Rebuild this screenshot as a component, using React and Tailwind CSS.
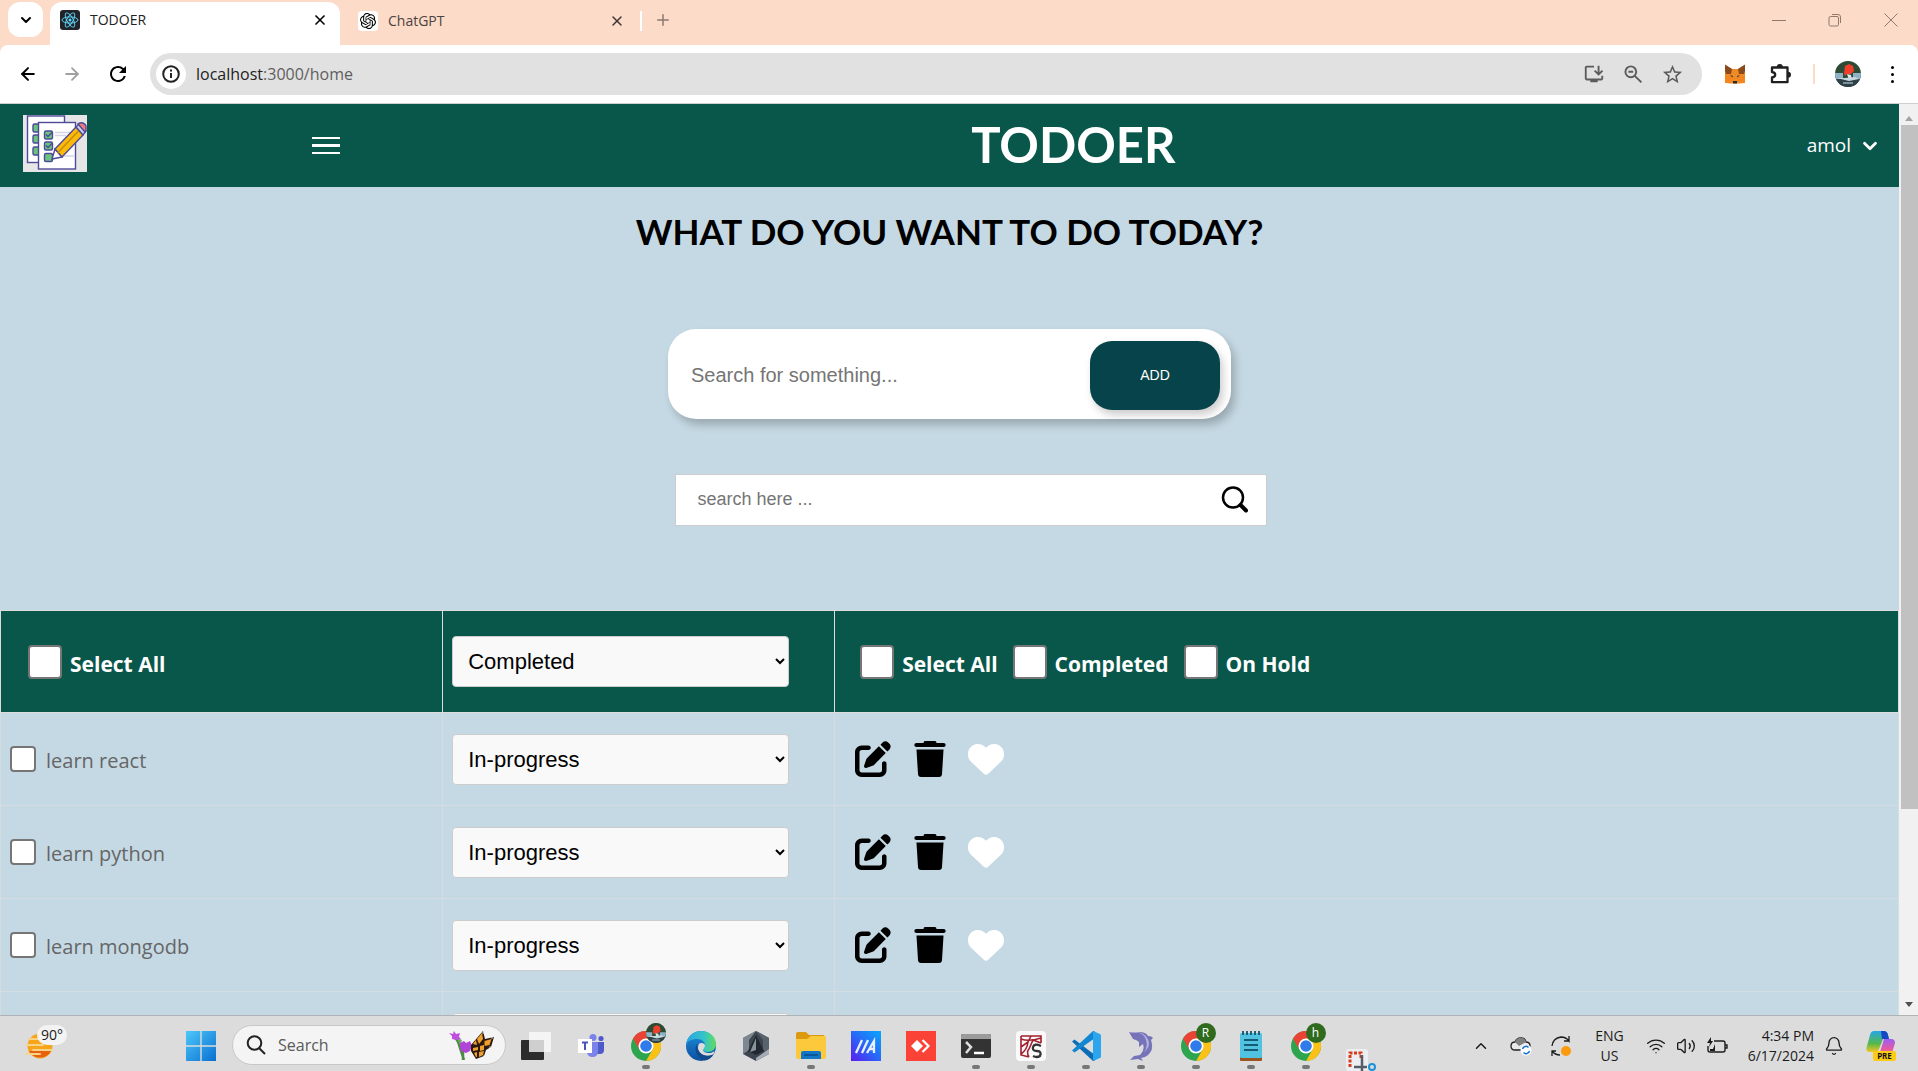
import React from "react";
import { FaPenToSquare, FaHeart } from "react-icons/fa6";
import { MdInstallDesktop, MdStarOutline, MdRefresh } from "react-icons/md";
import { X, Plus, ArrowLeft, ArrowRight, ChevronDown, ChevronUp, Bell, Wifi, Volume2 } from "lucide-react";
import { SiOpenai } from "react-icons/si";

const tasks = ["learn react", "learn python", "learn mongodb", ""];

function ReactLogo() {
  return (
    <svg viewBox="0 0 20 20" className="size-5">
      <rect width="20" height="20" rx="3" fill="#20232a" />
      <g fill="none" stroke="#61dafb" strokeWidth="0.9">
        <ellipse cx="10" cy="10" rx="8" ry="3.1" />
        <ellipse cx="10" cy="10" rx="8" ry="3.1" transform="rotate(60 10 10)" />
        <ellipse cx="10" cy="10" rx="8" ry="3.1" transform="rotate(120 10 10)" />
      </g>
      <circle cx="10" cy="10" r="1.5" fill="#61dafb" />
    </svg>
  );
}

function ZoomOutIcon() {
  return (
    <svg viewBox="0 0 20 20" className="size-5" fill="none" stroke="#5b5b5b" strokeWidth="1.9">
      <circle cx="7.8" cy="7.8" r="5.4" />
      <path d="M11.8 11.8 18.4 18.4M5.4 7.8h4.8" />
    </svg>
  );
}

function PuzzleIcon() {
  return (
    <svg viewBox="0 0 22 22" className="size-[22px]">
      <path d="M2 4.500h15.500v14.700H2v-4.700q3.200-.6 3.200-2.800T2 9z" fill="none" stroke="#1f1f1f" strokeWidth="2.300" strokeLinejoin="round" />
      <path d="M6.800 4a3 3 0 0 1 6 0zM18 8.800a3 3 0 0 1 0 6z" fill="#1f1f1f" />
    </svg>
  );
}

function Fox() {
  return (
    <svg viewBox="0 0 22 20" className="h-5 w-[22px]">
      <path d="M1 1 8 5h6l7-4v18l-5.500 0.500L13 19.500H9l-2.500 0L1 19z" fill="#f08a24" />
      <path d="M1 .5 8 5l-1 5-5 0L1 7zM21 .5 14 5l1 5 5 0 1-3z" fill="#8a4a1c" />
      <path d="M1 12h5l2 5-6 2zM21 12h-5l-2 5 6 2z" fill="#f5841f" />
      <path d="M9 17h4v2.500H9z" fill="#2b2b2b" />
      <path d="M6 11l3 1-.5 1.500zM16 11l-3 1 .5 1.500z" fill="#2b3a42" />
    </svg>
  );
}

function Photo({ id, className }) {
  return (
    <svg viewBox="0 0 26 26" className={className}>
      <clipPath id={id}><circle cx="13" cy="13" r="13" /></clipPath>
      <g clipPath={`url(#${id})`}>
        <rect width="26" height="26" fill="#2c4a34" />
        <path d="M0 12h8v7H0zM18 12h8v7h-8z" fill="#8fb3c6" />
        <path d="M0 18h26v8H0z" fill="#2f4048" />
        <path d="M10 5l4-2 4 2 1 5-3 3-4 0-2 2-1-3z" fill="#f0402c" />
        <path d="M12 13l4 1 1 5h-3z" fill="#dfe8ec" />
        <path d="M2 17l8 0 10-1 4 2-10 2z" fill="#c9d9e0" />
        <path d="M8 21h10v2H8z" fill="#7a9099" />
      </g>
    </svg>
  );
}

function TodoLogo() {
  return (
    <svg viewBox="0 0 64 57" className="h-[57px] w-16" aria-label="Todo list">
      <rect width="64" height="57" fill="#e6e6e6" />
      <g stroke="#4d4a99" strokeWidth="1.4">
        <rect x="4.500" y="1" width="37" height="46.500" fill="#fff" />
        <g fill="#6cc47c">
          <rect x="10" y="9" width="9" height="8" rx="1.500" />
          <rect x="10" y="20" width="9" height="8" rx="1.500" />
          <rect x="10" y="32" width="9" height="8" rx="1.500" />
        </g>
        <rect x="15.500" y="7.500" width="37" height="46.500" fill="#fff" />
        <g fill="#6cc47c">
          <rect x="21.500" y="16" width="8" height="8" rx="1.500" />
          <rect x="21.500" y="27" width="8" height="8" rx="1.500" />
          <rect x="21.500" y="38.500" width="8" height="8" rx="1.500" />
          <path d="m23 19.500 2 2 4-4M23 30.500l2 2 4-4" fill="none" />
        </g>
        <path d="M32 17.500h15M32 20.500h11M40 41h11" stroke="#d5d4ea" />
        <path d="M29 44 32 34l7 8z" fill="#fff" />
        <path d="M32 34 53 12l7 8-21 22z" fill="#fbb908" />
        <path d="m34.500 38 21-22" stroke="#c98a12" />
        <path d="m53 12 3-3 7 7-3 4z" fill="#c9d0ee" />
        <path d="m55 9 2-1q4-1 6 3v4l-1 2z" fill="#f0797b" />
      </g>
    </svg>
  );
}

function TrashIcon() {
  return (
    <svg viewBox="0 0 32 36" className="h-9 w-8">
      <path d="M11 0h10q1.500 0 1.500 2H29.500q2.200 0 2.200 2t-2.200 2H2.500Q.3 6 .3 4t2.200-2h7Q9.500 0 11 0z" />
      <path d="M2.500 8.500h27L28 33q-.2 3-3 3H7q-2.800 0-3-3z" />
    </svg>
  );
}

function ChromeLogo() {
  return (
    <svg viewBox="0 0 48 48" className="size-[30px]">
      <circle cx="24" cy="24" r="24" fill="#2da44e" />
      <path d="M24 24 3.200 12A24 24 0 0 1 44.800 12z" fill="#ea4335" />
      <path d="M24 12h20.800A24 24 0 0 1 24 48l10.400-18z" fill="#fbc116" />
      <path d="M3.200 12 13.600 30 24 12z" fill="#ea4335" />
      <circle cx="24" cy="24" r="12" fill="#fff" />
      <circle cx="24" cy="24" r="9.300" fill="#2f7bea" />
    </svg>
  );
}

function ChromeApp({ badge }) {
  return (
    <span className="relative">
      <ChromeLogo />
      <span className="absolute -top-2 -right-[5px] flex size-5 items-center justify-center rounded-full bg-[#2f6b1f] text-xs leading-none text-white">
        {badge}
      </span>
    </span>
  );
}

function EdgeLogo() {
  return (
    <svg viewBox="0 0 30 30" className="size-[30px]">
      <defs>
        <linearGradient id="edgeTop" x1="0" x2="1"><stop stopColor="#2aa5e0" /><stop offset=".6" stopColor="#35c4c8" /><stop offset="1" stopColor="#62dd5b" /></linearGradient>
        <linearGradient id="edgeLow" y2="1" x2="0"><stop stopColor="#1b8fdc" /><stop offset="1" stopColor="#0c4fa0" /></linearGradient>
      </defs>
      <circle cx="15" cy="15" r="15" fill="url(#edgeLow)" />
      <path d="M0 14C1 5 8 0 15 0c9 0 15 6 15 13 0 5-4 8-8 8-3 0-5-1-5-2s2-2 2-5c0-3-3-6-8-6S1 10 0 14z" fill="url(#edgeTop)" />
      <path d="M15 12c3 0 4 1 4 3s-2 3-2 4c0 2 3 3 6 3 2 0 4-1 5.500-1.800L27 24c-8 3-15-1-15-7 0-3 1-5 3-5z" fill="#dcdcdc" />
      <path d="M11 13c-3 3-2 14 8 16.500 4-.5 7-3 8.600-6.200C20 27 11 23 11 13z" fill="#114a8b" />
    </svg>
  );
}

function Butterfly() {
  return (
    <svg viewBox="0 0 46 30" className="h-[30px] w-[46px]">
      <path d="M4 6q5 3 7 12l4 12M14 17v13" stroke="#4c8a45" strokeWidth="2.500" fill="none" />
      <path d="M8 8l5 2-2 5z" fill="#6aa860" />
      <path d="M0 3l4 1 1-3 2 3 4-1-1 4 2 2-5 1-4-1 0-3z" fill="#c04fe0" />
      <path d="M11 13l4-2 2 2 4-2 2 5-2 5-4 2-5-2-1-4z" fill="#b044d4" />
      <path d="M22 15 34 1l2 8 9-2-3 10-5 3-2 6-8 3-5-8z" fill="#2b1a12" />
      <path d="M24 14l3-4 1 5zM28 9l5-6 1 6-4 5zM35.500 11l7-2-2 6-5 1zM24 18l5-1 0 3-5 1zM31 16l4-1v5l-4 1zM25 23l3-1 0 5-1 0zM30 22l5-1-1 4-4 2z" fill="#f0a02c" />
      <g fill="#fff"><circle cx="34" cy="3" r=".7" /><circle cx="43" cy="8" r=".7" /><circle cx="41" cy="17" r=".7" /><circle cx="35" cy="26" r=".7" /></g>
    </svg>
  );
}

function TaskView() {
  return (
    <svg viewBox="0 0 30 28" className="h-7 w-[30px]">
      <rect y="8" width="23" height="20" rx="1" fill="#2c2c2c" />
      <rect x="8" width="22" height="20" rx="1" fill="#f4f4f4" />
      <rect x="8" y="8" width="15" height="12" fill="#cfcfcf" />
    </svg>
  );
}

function Teams() {
  return (
    <svg viewBox="0 0 26 24" className="h-6 w-[26px]">
      <circle cx="15" cy="3.500" r="3.500" fill="#7b83eb" /><circle cx="23" cy="4.500" r="2.600" fill="#5059c9" />
      <path d="M18 8h8v8q0 4-4 4h-4z" fill="#5059c9" />
      <path d="M9 8h11v9q0 6-5.500 6T9 17z" fill="#7b83eb" />
      <rect y="5" width="14" height="14" fill="#fff" />
      <path d="M4 8.500h6M7 8.500v7.500" stroke="#4b53bc" strokeWidth="2" />
    </svg>
  );
}

function Cube() {
  return (
    <svg viewBox="0 0 28 30" className="h-[30px] w-7">
      <path d="M14 0 27 7v16L14 30 1 23V7z" fill="#3c4550" />
      <path d="M14 0 1 7v16l6-4V9z" fill="#7d8792" />
      <path d="M14 0 27 7v16l-6-4V9z" fill="#59636e" />
      <path d="M14 4 22 20 14 24 6 20z" fill="#22282f" />
      <path d="M14 7v12l-6 2z" fill="#8a949e" />
      <path d="M14 27 27 18v5L14 30z" fill="#a5adb5" />
    </svg>
  );
}

function Folder() {
  return (
    <svg viewBox="0 0 30 28" className="h-7 w-[30px]">
      <path d="M0 2q0-2 2-2h8l3 3h15v6H0z" fill="#dc9a10" />
      <path d="M0 7h11l4-3h15v21q0 2-2 2H2q-2 0-2-2z" fill="#fcc93c" />
      <path d="M5 27v-6q0-2 2-2h16q2 0 2 2v6z" fill="#1377c8" />
      <path d="M8 23h14" stroke="#0a4b87" strokeWidth="1.500" />
    </svg>
  );
}

function Armoury() {
  return (
    <svg viewBox="0 0 30 30" className="size-[30px]">
      <defs><linearGradient id="armoury" x1="0" y1="1" x2="1" y2="0"><stop stopColor="#5b1cf0" /><stop offset=".5" stopColor="#2869f7" /><stop offset="1" stopColor="#08a6fb" /></linearGradient></defs>
      <rect width="30" height="30" fill="url(#armoury)" />
      <path d="m5 22 6-13M11 22l6-13M16 22l7-12v12M18 18h4" stroke="#e8f1ff" strokeWidth="2.300" fill="none" />
    </svg>
  );
}

function AnyDesk() {
  return (
    <svg viewBox="0 0 30 30" className="size-[30px]">
      <rect width="30" height="30" fill="#fb4236" />
      <path d="m5 15 6-6 6 6-6 6z" fill="#fff" />
      <path d="m16.500 9 6 6-6 6" stroke="#fff" strokeWidth="2.200" fill="none" />
    </svg>
  );
}

function Terminal() {
  return (
    <svg viewBox="0 0 30 24" className="h-6 w-[30px]">
      <rect width="30" height="24" rx="2" fill="#333" />
      <path d="M0 5V2q0-2 2-2h26q2 0 2 2v3z" fill="#9b9b9b" />
      <path d="m5 8 5 5-5 6" stroke="#ddd" strokeWidth="2.500" fill="none" />
      <path d="M13 19h10" stroke="#fff" strokeWidth="2.500" />
    </svg>
  );
}

function WebApp() {
  return (
    <svg viewBox="0 0 30 30" className="size-[30px]">
      <rect width="30" height="30" rx="4" fill="#fafafa" />
      <path d="M5 5h20v7M5 5v19l8 2M5 8q8 3 20-1M5 16l7-5 3-6M12 11q-1 8-7 12M13 26q-3-5 0-8M25 12l-8-3-4 9" stroke="#a31f2c" strokeWidth="1.600" fill="none" />
      <path d="M25 15q-7-3-8 1t4 4 3 5q-3 2-7 0" stroke="#333" strokeWidth="2.300" fill="none" />
    </svg>
  );
}

function VsCode() {
  return (
    <svg viewBox="0 0 30 30" className="size-[30px]">
      <path d="M1 10.500 3.500 8.500 24 24v5.500L22 30z" fill="#0a6db5" />
      <path d="M1 19.500 3.500 21.500 24 7V.5L22 0z" fill="#1187d3" />
      <path d="M22 0l7 3q1 .5 1 1.500v21q0 1-1 1.500l-7 3z" fill="#2aa5ee" />
    </svg>
  );
}

function Dolphin() {
  return (
    <svg viewBox="0 0 26 30" className="h-[30px] w-[26px]">
      <path d="M1 1q5 1 10 0 7 0 9 4 4 0 5 2l-2 2q4 12-6 17l-4 1 2 3-5-2-8 1 4-4 6-1q5-5 3-11l-4 3 0-5q-2-2-6-3z" fill="#7673b8" />
      <path d="M2 1.500q12-1 15 5 4 8-1 15 7-6 4-13Q16-1 2 1.500z" fill="#b5b2e4" />
    </svg>
  );
}

function Notepad() {
  return (
    <svg viewBox="0 0 22 30" className="h-[30px] w-[22px]">
      <rect y="25" width="22" height="5" rx="1" fill="#9c5420" />
      <rect y="2" width="22" height="25" rx="1.500" fill="#4fc3e0" />
      <path d="M3 0v4M7 0v4M11 0v4M15 0v4M19 0v4" stroke="#14546c" strokeWidth="1.800" />
      <path d="M4 9h14M4 14h14M4 19h14" stroke="#145b76" strokeWidth="2" />
    </svg>
  );
}

function SnippingTool() {
  return (
    <svg viewBox="0 0 30 22" className="mt-auto h-[22px] w-[30px]">
      <rect width="22" height="22" rx="3" fill="#eceff1" />
      <path d="M4 18V4h11v5" stroke="#d83b1c" strokeWidth="3" strokeDasharray="3 1.500" fill="none" />
      <path d="M16 6v16M8 18h13" stroke="#555e66" strokeWidth="2.500" />
      <circle cx="26" cy="18" r="3" stroke="#1c93d8" strokeWidth="2" fill="none" />
    </svg>
  );
}

function Weather() {
  return (
    <span className="relative block pt-1">
      <svg viewBox="0 0 30 26" className="h-[26px] w-[30px]">
        <circle cx="15" cy="13" r="12.500" fill="#f7a51b" />
        <path d="M4 18a12.500 12.500 0 0 0 22 0z" fill="#e8620c" />
        <path d="M4 6h12M2 12h16M8 17h19M1 21h14" stroke="#f6d58a" strokeWidth="2" strokeLinecap="round" />
      </svg>
      <span className="absolute -top-1 left-3 rounded-full bg-[#f3f3f3] px-1 text-sm leading-5 text-[#1b1b1b]">90°</span>
    </span>
  );
}

function Copilot() {
  return (
    <svg viewBox="0 0 30 30" className="size-[30px]">
      <defs>
        <linearGradient id="copA" y2="1" x2="0"><stop stopColor="#22a7e8" /><stop offset=".6" stopColor="#56b84a" /><stop offset="1" stopColor="#f2c522" /></linearGradient>
        <linearGradient id="copB" y2="1" x2="0"><stop stopColor="#9c5cf2" /><stop offset=".6" stopColor="#e759a4" /><stop offset="1" stopColor="#f58c50" /></linearGradient>
      </defs>
      <path d="M8 0h10q3 0 4 4l1 4h-6l-4 10q-1 3-4 3H4q-5 0-3-6L4 4q1-4 4-4z" fill="url(#copA)" />
      <path d="M15 0h3q3 0 4 4l1 4h-7z" fill="#1647c4" />
      <path d="M18 8h7q4 0 4 4l-3 10q-1 3-4 3H10q3 0 4-4z" fill="url(#copB)" />
      <rect x="7" y="20" width="23" height="10" rx="2" fill="#fccc14" />
      <text x="18.500" y="28" textAnchor="middle" fontSize="8" fontWeight="700" fontFamily="Noto Sans, sans-serif" fill="#111">PRE</text>
    </svg>
  );
}

function CloudSync() {
  return (
    <svg viewBox="0 0 22 20" className="h-5 w-[22px]">
      <path d="M5 14q-4 0-4-4t4-4q2-5 7-4 3 0 4 4 4 0 4 4t-3 4z" fill="#e9e9e9" stroke="#222" strokeWidth="1.300" />
      <path d="M5 6q2-5 7-4 3 0 4 4l-7 4z" fill="#808080" />
      <circle cx="16" cy="14" r="5.500" fill="#fff" />
      <path d="M12.500 13a3.500 3.500 0 0 1 6-1.500M19.500 15a3.500 3.500 0 0 1-6 1.500" stroke="#1471d0" strokeWidth="1.500" fill="none" />
    </svg>
  );
}

function UpdateIcon() {
  return (
    <svg viewBox="0 0 22 22" className="size-[22px]" fill="none" stroke="#1c1c1c" strokeWidth="1.300">
      <path d="M2 11Q3 3 11 2q5 0 8 4V1M19 6h-5M2 21v-5h4M2 16q3 4 8 4" />
      <circle cx="16" cy="16" r="5" fill="#fb9a0d" stroke="none" />
    </svg>
  );
}

function Battery() {
  return (
    <svg viewBox="0 0 22 18" className="h-[18px] w-[22px]" fill="none" stroke="#1c1c1c" strokeWidth="1.400">
      <path d="M8 4h9q2 0 2 2v7q0 2-2 2H4q-2 0-2-2V9M19 8h2v3h-2" />
      <path d="M4 12h3l2-5v7H4z" fill="#1c1c1c" stroke="none" />
      <path d="M5 0 1 6h3L3 10l4-6H5z" fill="#1c1c1c" stroke="none" />
    </svg>
  );
}

function Caret({ up }) {
  return (
    <svg viewBox="0 0 8 5" className="h-[5px] w-2">
      <path d={up ? "M0 5 4 0l4 5z" : "M0 0h8L4 5z"} fill={up ? "#a3a3a3" : "#505050"} />
    </svg>
  );
}

const apps = [
  { name: "Task view", icon: <TaskView /> },
  { name: "Teams", icon: <Teams /> },
  { name: "Chrome", icon: <ChromeApp badge={<Photo id="chromePhoto" className="size-5" />} />, open: true },
  { name: "Edge", icon: <EdgeLogo /> },
  { name: "Cube", icon: <Cube /> },
  { name: "Files", icon: <Folder />, open: true },
  { name: "Armoury", icon: <Armoury /> },
  { name: "AnyDesk", icon: <AnyDesk /> },
  { name: "Terminal", icon: <Terminal />, open: true },
  { name: "Web tool", icon: <WebApp />, open: true },
  { name: "Code", icon: <VsCode />, open: true },
  { name: "Database", icon: <Dolphin />, open: true },
  { name: "Chrome R", icon: <ChromeApp badge="R" />, open: true },
  { name: "Notepad", icon: <Notepad />, open: true },
  { name: "Chrome h", icon: <ChromeApp badge="h" />, open: true },
  { name: "Snipping", icon: <SnippingTool /> },
];

function BrowserBar() {
  return (
    <header className="shrink-0 border-b border-[#cfcfcf] bg-[#fcdbc9]">
      <div className="flex h-[45px] items-center pl-2">
        <button aria-label="Search tabs" className="mr-[7px] mb-1.5 flex size-[35px] items-center justify-center rounded-xl bg-white">
          <ChevronDown className="size-4" strokeWidth={3} />
        </button>
        <div className="mt-0.5 flex h-[43px] w-[290px] items-center rounded-t-xl bg-white pr-3 pb-2 pl-2.5">
          <ReactLogo />
          <span className="ml-2.5 flex-1 text-sm text-[#222]">TODOER</span>
          <button aria-label="Close TODOER"><X className="size-4" strokeWidth={2.500} /></button>
        </div>
        <div className="mb-1 flex w-[302px] items-center justify-between border-r-2 border-white pr-[15px] pl-[18px]">
          <span className="mr-2.5 flex size-5 items-center justify-center rounded bg-white"><SiOpenai className="size-4" /></span>
          <span className="flex-1 text-sm text-[#4c4340]">ChatGPT</span>
          <button aria-label="Close ChatGPT"><X className="size-4 text-[#3c3532]" strokeWidth={2.200} /></button>
        </div>
        <button aria-label="New tab" className="mb-1.5 ml-3"><Plus className="size-[18px] text-[#8b7a72]" /></button>
        <div className="mb-1.5 ml-auto flex items-center gap-[42px] pr-5 text-[#91796d]">
          <button aria-label="Minimize"><svg viewBox="0 0 14 14" className="size-3.5" stroke="currentColor"><path d="M0 7.500h14" /></svg></button>
          <button aria-label="Restore"><svg viewBox="0 0 14 14" className="size-3.5" fill="none" stroke="currentColor"><rect x="1" y="3.500" width="9.500" height="9.500" rx="1.500" /><path d="M4 1.500h6q2.500 0 2.500 2.500v6" /></svg></button>
          <button aria-label="Close window"><svg viewBox="0 0 14 14" className="size-3.5" stroke="currentColor"><path d="m.5.5 13 13m0-13-13 13" /></svg></button>
        </div>
      </div>
      <div className="flex h-[58px] items-center rounded-t-lg bg-white pr-[18px] pl-[18px]">
        <button aria-label="Back"><ArrowLeft className="size-5" strokeWidth={2.400} /></button>
        <button aria-label="Forward" className="ml-6"><ArrowRight className="size-5 text-[#a0a0a0]" strokeWidth={2.200} /></button>
        <button aria-label="Reload" className="ml-6"><MdRefresh className="size-6" /></button>
        <div className="ml-5 flex h-[42px] flex-1 items-center rounded-full bg-[#e1e1e1] pr-[18px] pl-1.5">
          <button aria-label="Site information" className="flex size-[30px] items-center justify-center rounded-full bg-white">
            <svg viewBox="0 0 18 18" className="size-[18px]" fill="none" stroke="#222" strokeWidth="2"><circle cx="9" cy="9" r="7.800" /><path d="M9 8v5M9 4.500v2" /></svg>
          </button>
          <span className="ml-2.5 flex-1 text-base text-[#5f5f5f]"><span className="text-[#222]">localhost</span>:3000/home</span>
          <div className="flex items-center gap-[18px] text-[#5b5b5b]">
            <button aria-label="Install"><MdInstallDesktop className="size-[22px]" /></button>
            <button aria-label="Zoom"><ZoomOutIcon /></button>
            <button aria-label="Bookmark"><MdStarOutline className="size-[23px]" /></button>
          </div>
        </div>
        <button aria-label="Wallet" className="ml-[22px]"><Fox /></button>
        <button aria-label="Extensions" className="ml-6"><PuzzleIcon /></button>
        <span className="ml-[21px] h-5 w-0.5 bg-[#fcdbc9]" />
        <button aria-label="Profile" className="ml-5"><Photo id="profilePhoto" className="size-[26px]" /></button>
        <button aria-label="Menu" className="ml-6 flex flex-col gap-1 px-1.5">
          <i className="size-[3px] rounded-full bg-black" /><i className="size-[3px] rounded-full bg-black" /><i className="size-[3px] rounded-full bg-black" />
        </button>
      </div>
    </header>
  );
}

function StatusSelect({ id, value, label }) {
  return (
    <select id={id} aria-label={label} defaultValue={value} className="block h-[51px] w-[337px] rounded border border-[#ccc] bg-[#f9f9f9] px-[11px] font-['Liberation_Sans',Arial,sans-serif] text-[22px] font-normal text-black">
      <option>Completed</option>
      <option>In-progress</option>
      <option>On Hold</option>
    </select>
  );
}

function HeadCheck({ id, label }) {
  return (
    <span className="flex items-center">
      <input id={id} type="checkbox" className="size-[34px] appearance-none rounded border-2 border-[#767676] bg-white checked:bg-blue-600" />
      <label htmlFor={id} className="ml-2 pt-1 text-[21px] leading-7">{label}</label>
    </span>
  );
}

function TodoPage() {
  return (
    <main className="h-full flex-1 overflow-hidden bg-[#c5d9e4]">
      <nav className="grid h-[83px] grid-cols-[312px_1fr_auto] items-center bg-[#09574b] pr-[18px] text-white">
        <a href="#home" aria-label="Home" className="ml-[23px] w-16 pb-1"><TodoLogo /></a>
        <div className="flex items-center">
          <button aria-label="Open menu" className="flex flex-col gap-[5px]">
            <i className="h-0.5 w-7 bg-white" /><i className="h-[3px] w-7 bg-white" /><i className="h-0.5 w-7 bg-white" />
          </button>
          <span className="flex-1 pb-0.5 text-center font-['Lato',sans-serif] text-[49px] leading-none font-bold">TODOER</span>
        </div>
        <button className="flex items-center gap-2 text-[19px]">amol <ChevronDown className="size-[22px]" strokeWidth={3} /></button>
      </nav>
      <h1 className="mt-[22px] text-center font-['Lato',sans-serif] text-[35px] leading-[44px] font-bold text-black">WHAT DO YOU WANT TO DO TODAY?</h1>
      <form className="mx-auto mt-[76px] flex h-[90px] w-[563px] items-center rounded-[28px] bg-white pt-0.5 pr-[11px] pl-[23px] shadow-[4px_6px_8px_rgba(0,0,0,0.22)]">
        <input aria-label="New task" placeholder="Search for something..." className="min-w-0 flex-1 font-['Liberation_Sans',Arial,sans-serif] text-xl outline-none placeholder:text-[#757575]" />
        <button type="button" className="h-[69px] w-[130px] rounded-[22px] bg-[#07434a] font-['Liberation_Sans',Arial,sans-serif] text-sm text-white shadow-[3px_5px_8px_rgba(0,0,0,0.2)]">ADD</button>
      </form>
      <form className="mx-auto mt-[55px] flex h-[52px] w-[592px] translate-x-[21px] items-center border border-[#ccc] bg-white pr-[18px] pb-0.5 pl-[22px]">
        <input aria-label="Search tasks" placeholder="search here ..." className="min-w-0 flex-1 font-['Liberation_Sans',Arial,sans-serif] text-lg outline-none placeholder:text-[#757575]" />
        <button type="button" aria-label="Search">
          <svg viewBox="0 0 27 27" className="size-[27px]" fill="none" stroke="#000"><circle cx="12" cy="11.500" r="10" strokeWidth="2.500" /><path d="m19.500 19 5.500 5.500" strokeWidth="4" strokeLinecap="round" /></svg>
        </button>
      </form>
      <table className="mt-[84px] w-full table-fixed border-collapse">
        <thead className="bg-[#09574b] text-left text-white">
          <tr className="h-[102px]">
            <th className="w-[23.300%] border border-[#ddd] pl-[27px]"><HeadCheck id="all" label="Select All" /></th>
            <th className="w-[20.650%] border border-[#ddd] px-[9px]"><StatusSelect id="filter" label="Filter status" value="Completed" /></th>
            <th className="border border-[#ddd] pl-[25px]">
              <div className="flex gap-[15px]">
                <HeadCheck id="pick-all" label="Select All" />
                <HeadCheck id="pick-completed" label="Completed" />
                <HeadCheck id="pick-hold" label="On Hold" />
              </div>
            </th>
          </tr>
        </thead>
        <tbody>
          {tasks.map((task, i) => (
            <tr key={i} className="h-[93px]">
              <td className="border border-[#d6dde1] pl-[9px]">
                {task && (
                  <span className="flex items-center">
                    <input id={`task-${i}`} type="checkbox" className="size-[26px] appearance-none rounded border-2 border-[#767676] bg-white checked:bg-blue-600" />
                    <label htmlFor={`task-${i}`} className="ml-2.5 pt-1 text-xl leading-7 text-[#666]">{task}</label>
                  </span>
                )}
              </td>
              <td className="border border-[#d6dde1] px-[9px]"><StatusSelect id={`status-${i}`} label={`Status ${i + 1}`} value="In-progress" /></td>
              <td className="border border-[#d6dde1] pl-5">
                <div className="flex items-center text-black">
                  <button aria-label={`Edit ${i + 1}`}><FaPenToSquare className="size-9" /></button>
                  <button aria-label={`Delete ${i + 1}`} className="ml-[23px]"><TrashIcon /></button>
                  <button aria-label={`Like ${i + 1}`} className="ml-[22px]"><FaHeart className="size-9 text-white" /></button>
                </div>
              </td>
            </tr>
          ))}
        </tbody>
      </table>
    </main>
  );
}

function Taskbar() {
  return (
    <footer className="flex h-14 shrink-0 items-center border-t border-[#b0b3b6] bg-[#dcdcdc] pr-[22px] pl-[25px] text-[#1b1b1b]">
      <Weather />
      <button aria-label="Start" className="ml-[131px] pt-1">
        <svg viewBox="0 0 30 30" className="size-[30px]">
          <defs><linearGradient id="win" x2="1" y2="1"><stop stopColor="#4cc8fa" /><stop offset="1" stopColor="#0a6fd0" /></linearGradient></defs>
          <path d="M0 0h14.300v14.300H0zM15.700 0H30v14.300H15.700zM0 15.700h14.300V30H0zM15.700 15.700H30V30H15.700z" fill="url(#win)" />
        </svg>
      </button>
      <div className="mt-0.5 ml-4 flex h-10 w-[274px] items-center rounded-full border border-[#c8c8c8] bg-[#f4f4f4] pr-2.5 pl-[13px]">
        <svg viewBox="0 0 20 20" className="size-5" fill="none" stroke="#222" strokeWidth="2"><circle cx="8.500" cy="8" r="6.800" /><path d="m13 13 6 6" /></svg>
        <input aria-label="Search" placeholder="Search" className="ml-3 w-0 flex-1 text-base outline-none placeholder:text-[#5a5a5a]" />
        <Butterfly />
      </div>
      <div className="ml-0.5 flex self-stretch">
        {apps.map((app) => (
          <button key={app.name} aria-label={app.name} className="relative flex w-[55px] items-center justify-center pt-1">
            {app.icon}
            {app.open && <i className="absolute bottom-0.5 h-1 w-2 rounded-full bg-[#777]" />}
          </button>
        ))}
      </div>
      <div className="ml-auto flex items-center pt-1">
        <ChevronUp className="size-[18px]" />
        <span className="ml-5"><CloudSync /></span>
        <span className="ml-[18px]"><UpdateIcon /></span>
        <span className="ml-[23px] text-center text-sm leading-5">ENG<br />US</span>
        <Wifi className="ml-[22px] size-5" strokeWidth={1.600} />
        <Volume2 className="ml-2.5 size-5" strokeWidth={1.600} />
        <span className="ml-2.5"><Battery /></span>
        <span className="ml-5 text-right text-sm leading-5">4:34 PM<br />6/17/2024</span>
        <Bell className="ml-2.5 size-5" strokeWidth={1.600} />
        <span className="ml-[22px]"><Copilot /></span>
      </div>
    </footer>
  );
}

export default function App() {
  return (
    <div className="flex h-screen flex-col overflow-hidden font-['Open_Sans','Noto_Sans',sans-serif]">
      <BrowserBar />
      <div className="flex min-h-0 flex-1">
        <TodoPage />
        <aside className="flex w-[19px] flex-col items-center bg-[#f1f1f1] py-2" aria-hidden="true">
          <span className="flex h-[13px] items-center"><Caret up /></span>
          <span className="min-h-0 w-[17px] flex-1 self-end"><i className="block h-[78%] bg-[#c1c1c1]" /></span>
          <Caret />
        </aside>
      </div>
      <Taskbar />
    </div>
  );
}
